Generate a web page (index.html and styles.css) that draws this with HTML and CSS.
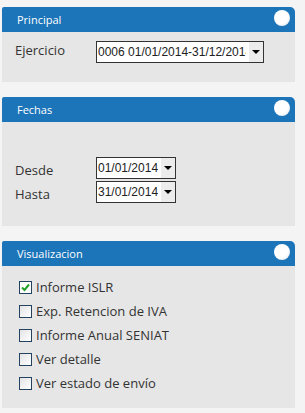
FILE: index.html
```html
<!DOCTYPE html>
<html>
<head>
<meta charset="utf-8">
<link rel="stylesheet" href="styles.css">
</head>
<body>
<div class="page">
  <section class="panel">
    <div class="panel-head"><span class="title">Principal</span><span class="knob"></span></div>
    <div class="panel-body body-principal">
      <div class="row">
        <span class="label">Ejercicio</span>
        <div class="select wide"><span class="val">0006 01/01/2014-31/12/2014</span><span class="arrow"></span></div>
      </div>
    </div>
  </section>
  <section class="panel">
    <div class="panel-head"><span class="title">Fechas</span><span class="knob"></span></div>
    <div class="panel-body body-fechas">
      <div class="row date-row">
        <span class="label low">Desde</span>
        <div class="select date"><span class="val">01/01/2014</span><span class="arrow"></span></div>
      </div>
      <div class="row date-row">
        <span class="label low">Hasta</span>
        <div class="select date"><span class="val">31/01/2014</span><span class="arrow"></span></div>
      </div>
    </div>
  </section>
  <section class="panel">
    <div class="panel-head"><span class="title">Visualizacion</span><span class="knob"></span></div>
    <div class="panel-body body-vis">
      <label class="check"><span class="box checked"><svg viewBox="0 0 11 11" width="11" height="11"><path d="M2 5.5 L4.5 8 L9 2.5" fill="none" stroke="#22a02a" stroke-width="2"/></svg></span><span class="ctext">Informe ISLR</span></label>
      <label class="check"><span class="box"></span><span class="ctext">Exp. Retencion de IVA</span></label>
      <label class="check"><span class="box"></span><span class="ctext">Informe Anual SENIAT</span></label>
      <label class="check"><span class="box"></span><span class="ctext">Ver detalle</span></label>
      <label class="check"><span class="box"></span><span class="ctext">Ver estado de envío</span></label>
    </div>
  </section>
</div>
</body>
</html>
```
FILE: styles.css
```css
html, body {
  margin: 0;
  padding: 0;
  background: #f4f4f4;
}
.page {
  width: 293px;
  margin-left: 2px;
  padding-top: 7px;
  display: flex;
  flex-direction: column;
  gap: 15px;
  font-family: "Open Sans", "DejaVu Sans", sans-serif;
  color: #333;
}
.panel {
  display: flex;
  flex-direction: column;
}
.panel-head {
  height: 25px;
  background: #1c74b9;
  border-radius: 2px 5px 0 0;
  display: flex;
  justify-content: space-between;
  align-items: flex-start;
  padding: 0 5px 0 15px;
}
.title {
  color: #fff;
  font-size: 11px;
  line-height: 25px;
}
.knob {
  width: 16px;
  height: 16px;
  margin-top: 3px;
  border-radius: 50%;
  background: radial-gradient(circle at 40% 38%, #ffffff 55%, #e9eef3 75%, #c7d2dd 100%);
}
.panel-body {
  background: #e6e6e6;
  display: flex;
  flex-direction: column;
}
.body-principal {
  height: 50px;
  padding: 9px 0 0 13px;
  box-sizing: border-box;
}
.body-fechas {
  height: 104px;
  padding: 35px 0 0 13px;
  box-sizing: border-box;
  gap: 2px;
}
.body-vis {
  height: 142px;
  padding: 9px 0 0 17px;
  box-sizing: border-box;
}
.row {
  display: flex;
  align-items: flex-start;
}
.label {
  width: 81px;
  font-size: 13px;
  line-height: 18px;
  color: #333;
}
.label.low {
  padding-top: 4px;
}
.select {
  display: flex;
  height: 22px;
  box-sizing: border-box;
  border: 1px solid #333;
  background: #fff;
  font-family: "Liberation Sans", Arial, sans-serif;
  font-size: 12px;
  color: #222;
  overflow: hidden;
}
.select.wide { width: 168px; }
.select.date { width: 80px; }
.val {
  flex: 1;
  overflow: hidden;
  white-space: nowrap;
  line-height: 20px;
  padding-left: 1px;
  margin-right: 3px;
}
.arrow {
  width: 14px;
  flex: none;
  background: #ececec;
  display: flex;
  align-items: center;
  justify-content: center;
}
.arrow::after {
  content: "";
  border-left: 4px solid transparent;
  border-right: 4px solid transparent;
  border-top: 4px solid #000;
}
.check {
  display: flex;
  align-items: center;
  height: 24px;
  font-size: 13px;
  color: #333;
}
.box {
  width: 13px;
  height: 13px;
  box-sizing: border-box;
  border: 1px solid #24425f;
  background: linear-gradient(135deg, #e4e4e4, #ffffff);
  margin-right: 4px;
  display: flex;
  align-items: center;
  justify-content: center;
  flex: none;
}
.box.checked { background: #fff; }
.ctext { line-height: 18px; }
```
